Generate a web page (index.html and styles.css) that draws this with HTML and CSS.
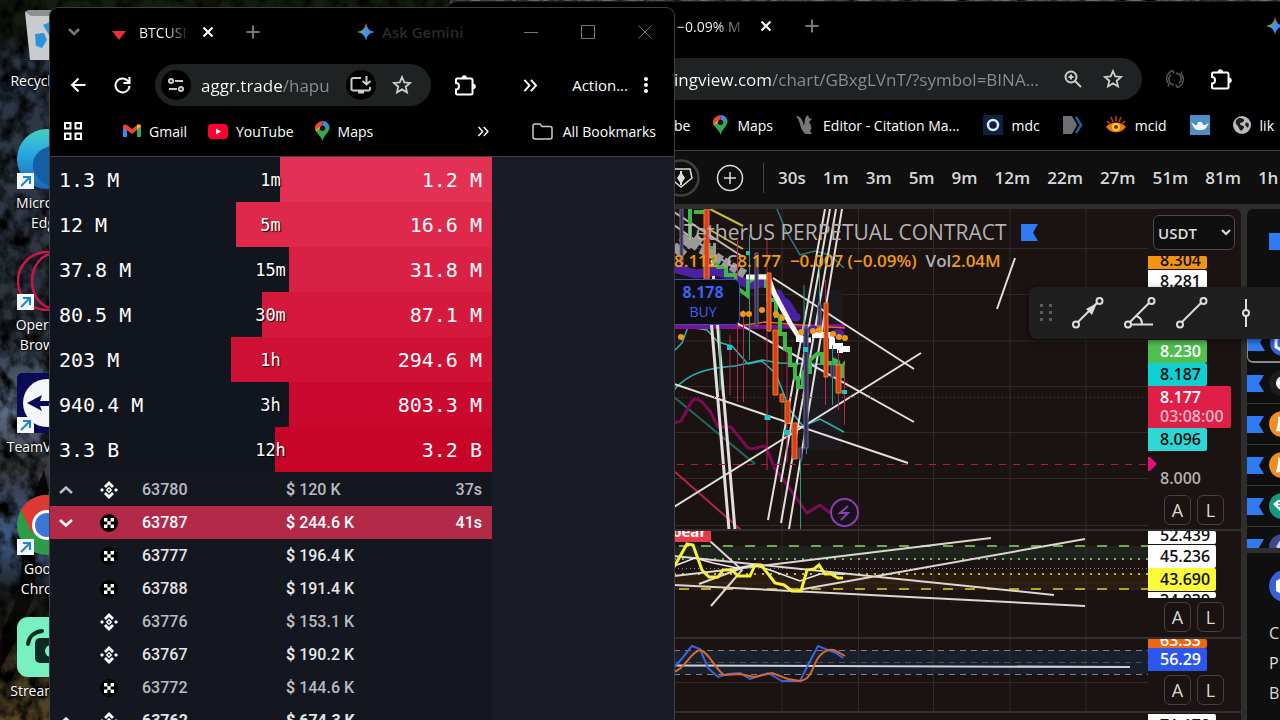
FILE: index.html
```html
<!DOCTYPE html>
<html lang="en">
<head>
    <meta charset="UTF-8">
    <meta name="viewport" content="width=device-width, initial-scale=1.0">
    <title>Desktop</title>
    <link rel="stylesheet" href="styles.css">
</head>
<body>
    <!-- shared icons -->
    <svg class="defs" width="0" height="0" aria-hidden="true">
        <defs>
            <linearGradient id="gemA" x1="0" y1="0" x2="1" y2="0.3">
                <stop offset="0" stop-color="#f5c518"/><stop offset=".35" stop-color="#4fb35f"/><stop offset=".6" stop-color="#4a8df8"/><stop offset="1" stop-color="#3f7cf5"/>
            </linearGradient>
            <linearGradient id="gemB" x1="0" y1="0" x2="0" y2="1">
                <stop offset="0" stop-color="#ef4444"/><stop offset=".4" stop-color="#ef4444" stop-opacity="0"/>
            </linearGradient>
            <linearGradient id="edge" x1="0" y1="0" x2="0" y2="1">
                <stop offset="0" stop-color="#45d0c0"/><stop offset=".4" stop-color="#2aa8e0"/><stop offset="1" stop-color="#1667b8"/>
            </linearGradient>
            <symbol id="i-gemini" viewBox="0 0 20 20">
                <path d="M10 0C11 6 14 9 20 10C14 11 11 14 10 20C9 14 6 11 0 10C6 9 9 6 10 0Z" fill="url(#gemA)"/>
                <path d="M10 0C11 6 14 9 20 10C14 11 11 14 10 20C9 14 6 11 0 10C6 9 9 6 10 0Z" fill="url(#gemB)"/>
            </symbol>
            <symbol id="i-x" viewBox="0 0 12 12"><path d="M1.5 1.5l9 9M10.5 1.5l-9 9" stroke="currentColor" stroke-width="2" fill="none"/></symbol>
            <symbol id="i-plus" viewBox="0 0 14 14"><path d="M7 .5v13M.5 7h13" stroke="currentColor" stroke-width="2" fill="none"/></symbol>
            <symbol id="i-star" viewBox="0 0 20 20"><path d="M10 2l2.3 5.4 5.8.5-4.400 3.800 1.300 5.700-5-3-5 3 1.300-5.700-4.400-3.800 5.800-.5z" stroke="currentColor" stroke-width="1.800" fill="none"/></symbol>
            <symbol id="i-puzzle" viewBox="0 0 22 22">
                <path d="M3 4.500h14a1.500 1.500 0 0 1 1.500 1.500v13a1.500 1.500 0 0 1-1.500 1.500H3.500A1.500 1.500 0 0 1 2 19v-3.500c4 0 4-6.500 0-6.500V5.500z" fill="none" stroke="currentColor" stroke-width="2"/>
                <path d="M8 4a2.300 2.300 0 0 1 4.600 0zM19 10a2.300 2.300 0 0 1 0 4.800z" fill="currentColor" stroke="currentColor"/>
            </symbol>
            <symbol id="i-more" viewBox="0 0 16 14"><path d="M2 1l5.500 6L2 13M9 1l5.500 6L9 13" stroke="currentColor" stroke-width="2" fill="none"/></symbol>
            <symbol id="i-maps" viewBox="0 0 14 19">
                <path d="M7 0a7 7 0 0 0-5.400 2.500L7 7z" fill="#e94335"/><path d="M7 0a7 7 0 0 1 6.500 4.500L7 8z" fill="#4285f4"/>
                <path d="M1.600 2.500A7 7 0 0 0 .8 10L7 6z" fill="#fbbc04"/><path d="M13.500 4.500C15 9.500 9 12 7 19 6 15 2.500 12.500.8 10L7 6z" fill="#34a853"/>
                <path d="M1.600 2.500A7 7 0 0 0 .5 9l5-5z" fill="#e94335"/><circle cx="7" cy="7" r="2.600" fill="#111"/>
            </symbol>
            <symbol id="i-link" viewBox="0 0 17 16"><path d="M0 0h17v16H0z" fill="#f4f6f8"/><path d="M4 13l8-8M6 4h7v7" stroke="#1c86c8" stroke-width="2" fill="none"/></symbol>
            <symbol id="i-binance" viewBox="0 0 18 18">
                <path d="M9 0l5 5-2 2-3-3-3 3-2-2zM9 18l5-5-2-2-3 3-3-3-2 2zM2 7l2 2-2 2-2-2zM16 7l2 2-2 2-2-2zM9 5.800L12.200 9 9 12.200 5.800 9z" fill="#fff"/>
                <path d="M9 7.800L10.200 9 9 10.200 7.800 9z" fill="#14171f"/>
            </symbol>
            <symbol id="i-okx" viewBox="0 0 18 18"><circle cx="9" cy="9" r="9" fill="#000"/><path d="M4 4h3.400v3.400H4zM10.600 4H14v3.400h-3.400zM7.300 7.300h3.400v3.400H7.300zM4 10.600h3.400V14H4zM10.600 10.600H14V14h-3.400z" fill="#fff"/></symbol>
            <symbol id="i-up" viewBox="0 0 14 8"><path d="M1 7l6-5.500L13 7" stroke="currentColor" stroke-width="2.500" fill="none"/></symbol>
            <symbol id="i-down" viewBox="0 0 14 8"><path d="M1 1l6 5.500L13 1" stroke="currentColor" stroke-width="2.500" fill="none"/></symbol>
            <symbol id="i-flag" viewBox="0 0 17 17"><path d="M0 0h17l-5 8.500 5 8.500H0z" fill="#2f7bf6"/></symbol>
        </defs>
    </svg>

    <svg class="wallpaper" width="100%" height="100%" aria-hidden="true">
        <defs>
            <linearGradient id="rock" x1="0" y1="0" x2="0" y2="1">
                <stop offset="0" stop-color="#141d0e"/><stop offset=".05" stop-color="#151c12"/><stop offset=".08" stop-color="#2a3444"/>
                <stop offset=".3" stop-color="#303947"/><stop offset=".45" stop-color="#293139"/><stop offset=".57" stop-color="#5b6c84"/>
                <stop offset=".65" stop-color="#3a3a3e"/><stop offset=".75" stop-color="#3d5a85"/><stop offset=".83" stop-color="#191a18"/><stop offset="1" stop-color="#5a4727"/>
            </linearGradient>
            <filter id="grain" x="0" y="0" width="100%" height="100%">
                <feTurbulence type="fractalNoise" baseFrequency=".07 .06" numOctaves="5" seed="8"/>
                <feColorMatrix values="0 0 0 0 0  0 0 0 0 0  0 0 0 0 0  0 2.400 0 0 -.85"/>
            </filter>
        </defs>
        <rect width="100%" height="100%" fill="url(#rock)"/>
        <path d="M450 0h830v4H450z" fill="#6a706d"/>
        <path d="M0 640L20 590 24 520 44 470 49 490 34 540 36 590 16 640 0 670z" fill="#0d0b08"/>
        <rect width="100%" height="100%" filter="url(#grain)"/>
    </svg>

    <ul class="shortcuts">
        <li>
            <svg width="60" height="60"><path d="M8 5l4-2h48v50H13z" fill="#c9ccce"/><path d="M8 5l6 4h46v-6H12z" fill="#8f9294"/><path d="M26 18l7-3 5 6-6 7zM18 27l9-1 3 7-5 8-6-2zM32 34h9v8h-8z" fill="#2a93dc"/></svg>
            <span>Recycle Bin</span>
        </li>
        <li>
            <svg width="60" height="60"><circle cx="30" cy="30" r="30" fill="url(#edge)"/><path d="M60 20c-22-10-46 0-44 18 2 14 14 20 26 20l18-8z" fill="#1560a5"/><use href="#i-link" y="44" width="17" height="16"/></svg>
            <span>Microsoft Edge</span>
        </li>
        <li>
            <svg width="60" height="60"><g fill="none" stroke="#c9164c" stroke-width="2.500"><circle cx="30" cy="30" r="29"/><ellipse cx="36" cy="30" rx="21" ry="27"/></g><use href="#i-link" y="43" width="17" height="16"/></svg>
            <span>Opera GX Browser</span>
        </li>
        <li>
            <svg width="60" height="60"><rect width="60" height="60" rx="5" fill="#0b0b55"/><circle cx="30" cy="30" r="24" fill="#f5f6f8"/><path d="M10 30l15-8-2 6h16v5H23l2 5z" fill="#0b0b55"/><use href="#i-link" y="44" width="17" height="16"/></svg>
            <span>TeamViewer</span>
        </li>
        <li>
            <svg width="60" height="60"><circle cx="30" cy="30" r="30" fill="#2f9a47"/><path d="M4 15a30 30 0 0 1 56 14H30L15 38z" fill="#dc3a32"/><circle cx="30" cy="30" r="15" fill="#fff"/><circle cx="30" cy="30" r="12" fill="#3b77d8"/><use href="#i-link" y="44" width="17" height="16"/></svg>
            <span>Google Chrome</span>
        </li>
        <li>
            <svg width="60" height="60"><rect width="60" height="60" rx="11" fill="#78f0c0"/><rect x="18" y="21" width="34" height="25" rx="5" fill="#0a2a24"/><path d="M11 27c1-7 6-12 14-13" stroke="#0a2a24" stroke-width="4" fill="none" stroke-linecap="round"/><circle cx="34" cy="34" r="6" fill="#78f0c0"/></svg>
            <span>Streamlabs</span>
        </li>
    </ul>

    <!-- TradingView window -->
    <section class="window window-chart">
        <header class="tabstrip">
            <span class="tab-title">−0.09% M</span>
            <button class="icon-btn tab-close" aria-label="Close tab"><svg width="12" height="12"><use href="#i-x"/></svg></button>
            <button class="icon-btn new-tab" aria-label="New tab"><svg width="14" height="14"><use href="#i-plus"/></svg></button>
            <button class="icon-btn gemini-only" aria-label="Gemini"><svg width="18" height="18"><use href="#i-gemini"/></svg></button>
        </header>
        <nav class="navbar">
            <div class="address">
                <input class="url url-chart" type="text" aria-label="Address" value="ingview.com/chart/GBxgLVnT/?symbol=BINA...">
                <button class="icon-btn" aria-label="Zoom"><svg width="20" height="20" fill="none" stroke="currentColor" stroke-width="2"><circle cx="8" cy="8" r="5.500"/><path d="M12 12l6 6M5.500 8h5M8 5.500v5"/></svg></button>
                <button class="icon-btn" aria-label="Bookmark"><svg width="20" height="20"><use href="#i-star"/></svg></button>
            </div>
            <button class="icon-btn dim" aria-label="Extension"><svg width="20" height="20" fill="none" stroke="currentColor" stroke-width="1.500"><path d="M8 1.500a8.500 8.500 0 0 0-4 14l-1 2M12 18.500a8.500 8.500 0 0 0 4-14l1-2M6 5.500a6 6 0 0 0 3 10.500M14 14.500A6 6 0 0 0 11 4M8 1.500l1 3M12 18.500l-1-3"/></svg></button>
            <button class="icon-btn" aria-label="Extensions"><svg width="22" height="22"><use href="#i-puzzle"/></svg></button>
        </nav>
        <nav class="bookmarks">
            <a href="#">be</a>
            <a href="#"><svg width="15" height="20"><use href="#i-maps"/></svg>Maps</a>
            <a href="#"><svg width="18" height="20" fill="#777"><path d="M0 1c5 0 7 5 8 10 1-4 0-9 4-11l1 3 3 1-3 3c3 4 3 7 1 9l2 3h-6C4 17 5 6 0 1z"/></svg>Editor - Citation Ma...</a>
            <a href="#"><svg width="20" height="20"><path d="M0 0h20v20H0z" fill="#0d2140"/><circle cx="10" cy="10" r="5" fill="none" stroke="#dfe8f5" stroke-width="2.500"/></svg>mdc</a>
            <a href="#" aria-label="Docs"><svg width="20" height="20"><path d="M0 1h9l5 9-5 9H0z" fill="#6c7075"/><path d="M13 2l5 8-5 8" fill="none" stroke="#1d5f92" stroke-width="2.500"/></svg></a>
            <a href="#"><svg width="20" height="18"><path d="M0 11c5-6 15-6 20 0-5 7-15 7-20 0z" fill="#f07a12"/><circle cx="10" cy="11" r="4" fill="#ffd21f"/><circle cx="10" cy="11" r="2" fill="#7a2500"/><path d="M1 5l3 3M5 1l2 5M10 0v5M15 1l-2 5M19 5l-3 3" stroke="#d9341a" stroke-width="1.500"/></svg>mcid</a>
            <a href="#" aria-label="Dock"><svg width="20" height="20"><path d="M0 0h20v20H0z" fill="#4f8fc4"/><path d="M1 7l4 3h2l1-3h4l1 3h2l4-2-3 5c-3 3-9 3-12 0z" fill="#f4f8fb"/></svg></a>
            <a href="#"><svg width="18" height="18"><circle cx="9" cy="9" r="9" fill="#b8babd"/><path d="M6 2c3 0 6 1 5 3s-4 1-4 3 4 1 4 3-2 2-2 4c-3-1-3-4-5-6s-2-5 2-7zM13 6l3 2-1 4-3-3z" fill="#1c1d1f"/></svg>lik</a>
        </nav>

        <div class="tv">
            <div class="tv-top">
                <button class="icon-btn pen" aria-label="Tools"><svg width="38" height="38" fill="none"><circle cx="19" cy="19" r="17.500" stroke="#404040" stroke-width="2.500"/><path d="M8 10h20l2 9-11 9L8 19z" stroke="#ddd" stroke-width="1.500"/><path d="M19 13l4 6-4 6-4-6zM18 12h2v14h-2z" fill="#ddd"/></svg></button>
                <button class="icon-btn" aria-label="Add"><svg width="28" height="28" fill="none" stroke="#ddd" stroke-width="1.500"><circle cx="14" cy="14" r="12.500"/><path d="M14 8v12M8 14h12"/></svg></button>
                <div class="intervals">
                    <button>30s</button><button>1m</button><button>3m</button><button>5m</button><button>9m</button><button>12m</button><button>22m</button><button>27m</button><button>51m</button><button>81m</button><button>1h</button>
                </div>
            </div>

            <div class="tv-body">
                <main class="panes">
                    <div class="pane pane-price">
                        <div class="plot">
                            <svg width="474" height="321" viewBox="674 209 474 321" fill="none">
                                <path d="M782 209v321M858.500 209v321M933.500 209v321M1010 209v321M1086 209v321M674 248.500h474M674 294.500h474M674 341h474M674 386.500h474M674 432.500h474M674 478.500h474M674 525.500h474" stroke="#302a2a"/>
                                <path d="M804 290h38v160h-38z" fill="#1c1a1f"/>
                                <!-- averages -->
                                <path d="M777 209l9 22 14 24 15-4 15 4 14 13" stroke="#287f82" stroke-width="1.500"/>
                                <path d="M674 351l8-8 6-16 19 3 11 12 14 4 16 18 14-3 14 13 14 36 13 16 17-7 24 13M674 390c15-18 35-22 61-24l27-6 18 3 65 2" stroke="#2cb5b0" stroke-width="1.500"/>
                                <path d="M674 397l81 67" stroke="#24695f" stroke-width="2"/>
                                <path d="M674 471l67 59" stroke="#b52447" stroke-width="2"/>
                                <path d="M674 423l7-2 11-20c4-4 6-1 9 0l9 10 8 16 13 0 17 21c8 3 13-4 18-1l9 22 15 20 17 24 13-8 10 8" stroke="#7d0a55" stroke-width="3"/>
                                <path d="M674 327h92l79-1" stroke="#7c1295" stroke-width="4"/>
                                <path d="M738 326l27-4 36 3 44 3" stroke="#e06a20" stroke-width="1.500"/>
                                <!-- trend lines -->
                                <g stroke="#e2dedc" stroke-width="2">
                                    <path d="M773 278l141 91M921 353L674 507M737 323l177 99M674 384l234 79M1015 258l-18 51"/>
                                    <path d="M825 209l-57 311M830 209l-49 273M836 209l-55 314M842 209l-53 320"/>
                                    <path d="M706 260l23 270M712 260l23 270" stroke-width="3"/>
                                    <path d="M674 212l69 45M674 225l50 36" stroke="#b9b5b2"/>
                                </g>
                                <path d="M710 209l33 17M707 228l36 21" stroke="#c9bd35" stroke-width="2"/>
                                <!-- bands -->
                                <path d="M674 268l22 6 20-3 18 6 16 8 18-3" stroke="#4a21a3" stroke-width="9"/>
                                <path d="M778 294l7 12M786 303l6 9M795 317h1M812 330h2M836 334h4" stroke="#4a21a3" stroke-width="9" stroke-linecap="round"/>
                                <path d="M690 209v34M694 212h14M712 246v10l6 11h8v8h10v12l12 9V282l10-6h8v10h2v14h8v16h4v18h5v15h5v16h5v13h3v9h5v-15h7v-12l7-6h5v9h12v-3l4 2 2 8 3-4v12" stroke="#41b649" stroke-width="4"/>
                                <path d="M676 254l14-16 10 8 8 4h8" stroke="#9c9a98" stroke-width="14" stroke-dasharray="9 3"/>
                                <path d="M708 252l38 23" stroke="#9c9a98" stroke-width="9" stroke-dasharray="7 2"/>
                                <path d="M746 277h22l6 16 16 30 11 17h10" stroke="#f6f3f3" stroke-width="5"/>
                                <path d="M796 339h12M812 335h22M832 338v8h8v7M838 349h12" stroke="#fff" stroke-width="6"/>
                                <!-- wicks -->
                                <path d="M737.500 240v162M743.500 310v92M767 240v230M787 350v112M825.500 280v125M838.500 350v60M844.500 365v60M730 335v60" stroke="#b32a55"/>
                                <path d="M749.500 235v125M804 285v60M800.500 448v82M806.500 448v6M819.500 260v60M832.500 345v60M720 330v60" stroke="#299b7e"/>
                                <!-- candles -->
                                <g fill="#dc3d20" stroke="#e38a27">
                                    <path d="M704 209h5v71h-5zM767 273h4v58h-4zM773 330h5v65h-5zM780 394h4v8h-4zM785 401h5v22h-5zM792 423h5v36h-5zM824 303h4v74h-4zM836 365h5v28h-5z"/>
                                </g>
                                <g fill="#33304e" stroke="#6c6795">
                                    <path d="M755 253h3v73h-3zM680 209h3v55h-3zM804 328h4v120h-4zM799 448h3v11h-3zM818 305h3v20h-3zM831 365h3v12h-3z"/>
                                </g>
                                <path d="M764.500 415h6v5h-6zM784 430h6v5h-6zM727 345h5v5h-5zM803 347h5v5h-5zM842 390h5v4h-5zM746 251h4v4h-4z" fill="#20c4c4"/>
                                <g fill="#ee9817"><circle cx="681" cy="337" r="3"/><circle cx="743" cy="314" r="3"/><circle cx="749" cy="314" r="3"/><circle cx="762" cy="310" r="3"/><circle cx="776" cy="314" r="3"/><circle cx="782" cy="318" r="3"/><circle cx="801" cy="332" r="3"/><circle cx="813" cy="331" r="3"/><circle cx="819" cy="330" r="3"/><circle cx="833" cy="334" r="3"/><circle cx="839" cy="337" r="3"/><circle cx="845" cy="338" r="3"/></g>
                                <path d="M674 397.500h474" stroke="#80303f" stroke-dasharray="1 3"/>
                                <path d="M677 464.500h471" stroke="#b3184d" stroke-dasharray="7 7"/>
                                <circle cx="844.500" cy="512.500" r="13.500" fill="#17111a" stroke="#8a3fae" stroke-width="2"/>
                                <path d="M848 506l-8 7h8l-7 7" stroke="#8a3fae" stroke-width="2"/>
                            </svg>
                            <div class="legend">
                                <div class="legend-title">TetherUS PERPETUAL CONTRACT <svg width="17" height="17"><use href="#i-flag"/></svg></div>
                                <div class="legend-values"><span>8.112</span><span><i>C</i>8.177</span><span>−0.007 (−0.09%)</span><span><i>Vol</i>2.04M</span></div>
                            </div>
                            <button class="buy"><b>8.178</b>BUY</button>
                        </div>
                        <div class="axis">
                            <select class="currency" aria-label="Currency"><option>USDT</option></select>
                            <span class="tag orange cut-top">8.304</span>
                            <span class="tag white">8.281</span>
                            <span class="tag green push">8.230</span>
                            <span class="tag cyan">8.187</span>
                            <span class="tag red">8.177<small>03:08:00</small></span>
                            <span class="tag aqua">8.096</span>
                            <svg class="marker" width="9" height="14"><path d="M0 0h2l7 7-7 7H0z" fill="#e0117c"/></svg>
                            <span class="tick">8.000</span>
                            <div class="scale"><button>A</button><button>L</button></div>
                        </div>
                    </div>

                    <div class="pane pane-rsi">
                        <div class="plot">
                            <svg width="474" height="106" viewBox="674 531 474 106" fill="none">
                                <path d="M674 546h474v14H674z" fill="#1e241b"/><path d="M674 573h474v17H674z" fill="#2b1d0d"/>
                                <path d="M782 531v106M858.500 531v106M933.500 531v106M1010 531v106M1086 531v106M674 583h474" stroke="#302a2a"/>
                                <path d="M674 546h474" stroke="#72a45e" stroke-width="2" stroke-dasharray="10 12" stroke-dashoffset="-5"/>
                                <path d="M674 559h474" stroke="#8fa080" stroke-width="2" stroke-dasharray="2 6"/>
                                <path d="M674 568.500h474" stroke="#8f8a88" stroke-dasharray="1 3"/>
                                <path d="M674 574h474" stroke="#c2b443" stroke-width="2" stroke-dasharray="2 6"/>
                                <path d="M674 589h474" stroke="#b5a51e" stroke-width="2" stroke-dasharray="10 12" stroke-dashoffset="-5"/>
                                <path d="M674 576l86-10 231-28M798 590l287-51M674 556l380 39M674 585l411 21M710 541l32 29-31 36M699 584l43-16" stroke="#ddd7d0" stroke-width="2"/>
                                <path d="M674 566l21-8 18 5 24 5 16-3 17 5 30 11 20-7 25 0" stroke="#eee" stroke-width="1.500"/>
                                <path d="M674 567l13-23 6 1 9 25 7 7h9l5-7h9l6 6h12l5-11h6l8 10 6 8 9 2 8 6h9l6-21 7-1 5-4 6 9h6l7 4h5" stroke="#f5f03c" stroke-width="3"/>
                            </svg>
                            <span class="signal">bear</span>
                        </div>
                        <div class="axis">
                            <span class="tag wide white cut-top">52.439</span>
                            <span class="tag wide white">45.236</span>
                            <span class="tag wide yellow">43.690</span>
                            <span class="tag wide white cut-bottom">34.939</span>
                            <div class="scale"><button>A</button><button>L</button></div>
                        </div>
                    </div>

                    <div class="pane pane-stoch">
                        <div class="plot">
                            <svg width="474" height="72" viewBox="674 639 474 72" fill="none">
                                <path d="M674 650h474v24H674z" fill="#19202b"/>
                                <path d="M782 639v72M858.500 639v72M933.500 639v72M1010 639v72M1086 639v72M674 682.500h474" stroke="#302a2a"/>
                                <path d="M674 650.500h474M674 674.500h474" stroke="#817f80" stroke-dasharray="6 5"/><path d="M674 662.500h474" stroke="#4a4f57" stroke-dasharray="6 5"/>
                                <path d="M674 665.500l456 1.500" stroke="#cfd0dc" stroke-width="2"/>
                                <path d="M674 667C682 660 688 650 692 646L700 649 708 668 718 677 728 674 740 673 750 679 768 673 782 681 800 681 808 665 818 646 828 650 836 653 843 658" stroke="#3e62df" stroke-width="2"/>
                                <path d="M674 672C686 668 690 652 700 650C710 653 714 668 724 675L740 674 754 677 772 673 788 679 800 681C812 679 812 667 818 658C824 650 830 648 836 651L845 656" stroke="#d66a31" stroke-width="2"/>
                            </svg>
                        </div>
                        <div class="axis">
                            <span class="tag deep cut-top short">63.33</span>
                            <span class="tag blue">56.29</span>
                            <div class="scale"><button>A</button><button>L</button></div>
                        </div>
                    </div>

                    <div class="pane pane-last">
                        <div class="plot"></div>
                        <div class="axis"><span class="tag wide white">71.178</span></div>
                    </div>
                </main>

                <aside class="watch">
                    <div class="watch-list">
                        <div class="watch-head"><span></span></div>
                        <div class="coin active"><svg width="17" height="17"><use href="#i-flag"/></svg><svg width="26" height="26"><circle cx="13" cy="13" r="13" fill="#3a62d8"/><path d="M13 5l7 4v8l-7 4-7-4V9z" fill="none" stroke="#fff" stroke-width="3"/></svg></div>
                        <div class="coin"><svg width="17" height="17"><use href="#i-flag"/></svg><svg width="26" height="26"><circle cx="13" cy="13" r="13" fill="#1d1d1d"/><circle cx="14" cy="13" r="7" fill="#fff"/></svg></div>
                        <div class="coin"><svg width="17" height="17"><use href="#i-flag"/></svg><svg width="26" height="26"><circle cx="13" cy="13" r="13" fill="#ef8e24"/><path d="M9 7h6a3 3 0 0 1 0 6h-5 6a3 3 0 0 1 0 6H7M11 7L9 19" fill="none" stroke="#fff" stroke-width="2.500"/></svg></div>
                        <div class="coin"><svg width="17" height="17"><use href="#i-flag"/></svg><svg width="26" height="26"><circle cx="13" cy="13" r="13" fill="#ef8e24"/><path d="M9 7h6a3 3 0 0 1 0 6h-5 6a3 3 0 0 1 0 6H7M11 7L9 19" fill="none" stroke="#fff" stroke-width="2.500"/></svg></div>
                        <div class="coin"><svg width="17" height="17"><use href="#i-flag"/></svg><svg width="26" height="26"><circle cx="13" cy="13" r="13" fill="#159a7d"/><path d="M9 7h12v7l-8 6-9-9z" fill="#fff"/><path d="M9 10h8M9 13h8" stroke="#159a7d" stroke-width="1.500"/></svg></div>
                        <div class="coin"><svg width="17" height="17"><use href="#i-flag"/></svg><svg width="26" height="26"><circle cx="13" cy="13" r="13" fill="#3c4a8c"/><path d="M13 3l6 10-6 4-6-4z" fill="#c9d0ef"/></svg></div>
                    </div>
                    <div class="details">
                        <svg width="32" height="32"><circle cx="16" cy="16" r="16" fill="#3a62d8"/><path d="M16 6l9 5v10l-9 5-9-5V11z" fill="#fff"/></svg>
                        <p>C</p><p>PI</p><p>BI</p>
                    </div>
                </aside>

                <div class="draw-bar">
                    <svg width="12" height="18" fill="#5c5c5c"><path d="M0 0h3v3H0zM9 0h3v3H9zM0 7h3v3H0zM9 7h3v3H9zM0 14h3v3H0zM9 14h3v3H9z"/></svg>
                    <button class="icon-btn" aria-label="Arrow"><svg width="32" height="32" fill="none" stroke="#ddd" stroke-width="2"><circle cx="4" cy="27.500" r="3"/><circle cx="27.500" cy="4" r="3"/><path d="M6 25L25 6"/><path d="M14 12l11-6-5 12z" fill="#ddd" stroke="none"/></svg></button>
                    <button class="icon-btn" aria-label="Trend angle"><svg width="32" height="32" fill="none" stroke="#ddd" stroke-width="2"><circle cx="4" cy="27.500" r="3"/><circle cx="27.500" cy="4" r="3"/><path d="M6 25L25 6M7 27.500h22M12 19c4 1 6 4 6 8"/></svg></button>
                    <button class="icon-btn" aria-label="Trend line"><svg width="32" height="32" fill="none" stroke="#ddd" stroke-width="2"><circle cx="4" cy="27.500" r="3"/><circle cx="27.500" cy="4" r="3"/><path d="M6 25L25 6"/></svg></button>
                    <button class="icon-btn" aria-label="Vertical line"><svg width="32" height="32" fill="none" stroke="#ddd" stroke-width="2"><circle cx="18" cy="16" r="3"/><path d="M18 2v11M18 19v11"/></svg></button>
                </div>
            </div>
        </div>
    </section>

    <!-- aggr window -->
    <section class="window window-aggr">
        <header class="tabstrip">
            <button class="icon-btn tab-list" aria-label="Search tabs"><svg width="12" height="8" fill="none" stroke="#777" stroke-width="2.500"><path d="M1 1l5 5 5-5"/></svg></button>
            <svg class="favicon" width="14" height="9"><path d="M0 0h14L7 9z" fill="#ee2c3c"/></svg>
            <span class="tab-title">BTCUSD</span>
            <button class="icon-btn tab-close" aria-label="Close tab"><svg width="12" height="12"><use href="#i-x"/></svg></button>
            <button class="icon-btn new-tab" aria-label="New tab"><svg width="14" height="14"><use href="#i-plus"/></svg></button>
            <button class="gemini"><svg width="18" height="18"><use href="#i-gemini"/></svg>Ask Gemini</button>
            <div class="win-controls">
                <button class="icon-btn" aria-label="Minimize"><svg width="14" height="14"><path d="M0 7.500h14" stroke="currentColor"/></svg></button>
                <button class="icon-btn" aria-label="Maximize"><svg width="14" height="14"><path d="M.5.5h13v13H.5z" stroke="currentColor" fill="none"/></svg></button>
                <button class="icon-btn" aria-label="Close"><svg width="14" height="14"><path d="M.5.5l13 13M13.5.5l-13 13" stroke="currentColor"/></svg></button>
            </div>
        </header>
        <nav class="navbar">
            <button class="icon-btn" aria-label="Back"><svg width="16" height="16" fill="none" stroke="currentColor" stroke-width="2"><path d="M15.500 8H2M8.500 1.500L2 8l6.500 6.500"/></svg></button>
            <button class="icon-btn reload" aria-label="Reload"><svg width="17" height="17" fill="none" stroke="currentColor" stroke-width="2"><path d="M15.500 9a7 7 0 1 1-2-5.500l1.500 2M15.500 0v6h-6"/></svg></button>
            <div class="address">
                <button class="icon-btn round" aria-label="Site settings"><svg width="16" height="16" fill="none" stroke="currentColor" stroke-width="2"><circle cx="3" cy="4" r="2"/><circle cx="13" cy="12" r="2"/><path d="M7 4h8M1 12h8"/></svg></button>
                <input class="url url-aggr" type="text" aria-label="Address" value="aggr.trade/hapu">
                <button class="icon-btn round install" aria-label="Install"><svg width="22" height="20" fill="none" stroke="currentColor" stroke-width="2"><path d="M11 3H3a1.500 1.500 0 0 0-1.500 1.500v9.500A1.500 1.500 0 0 0 3 15.500h15.500A1.500 1.500 0 0 0 20 14v-2M16.500 1v8M12.500 6l4 3.500 4-3.500M8 17.500h6"/></svg></button>
                <button class="icon-btn" aria-label="Bookmark"><svg width="20" height="20"><use href="#i-star"/></svg></button>
            </div>
            <button class="icon-btn ext" aria-label="Extensions"><svg width="22" height="22"><use href="#i-puzzle"/></svg></button>
            <button class="icon-btn overflow" aria-label="More extensions"><svg width="16" height="13"><use href="#i-more"/></svg></button>
            <button class="action">Action...<svg width="4" height="16" fill="currentColor"><circle cx="2" cy="2" r="2"/><circle cx="2" cy="8" r="2"/><circle cx="2" cy="14" r="2"/></svg></button>
        </nav>
        <nav class="bookmarks">
            <button class="icon-btn apps" aria-label="Apps"><svg width="18" height="18" fill="none" stroke="currentColor" stroke-width="2"><path d="M1 1h5.500v5.500H1zM11.500 1H17v5.500h-5.500zM1 11.500h5.500V17H1zM11.500 11.500H17V17h-5.500z"/></svg></button>
            <a href="#"><svg width="18" height="14"><path d="M0 2v11h4V6z" fill="#4285f4"/><path d="M18 2v11h-4V6z" fill="#34a853"/><path d="M0 2.500C0 0 3 0 4 1l5 4 5-4v5L9 10 0 3.500z" fill="#ea4335"/><path d="M14 1c1.500-1.500 4-.5 4 1.500L14 6z" fill="#fbbc04"/></svg>Gmail</a>
            <a href="#"><svg width="20" height="15"><rect width="20" height="15" rx="4" fill="#ff0033"/><path d="M8 4.500l5 3-5 3z" fill="#fff"/></svg>YouTube</a>
            <a href="#"><svg width="15" height="20"><use href="#i-maps"/></svg>Maps</a>
            <button class="icon-btn bm-more" aria-label="More bookmarks"><svg width="12" height="11"><use href="#i-more"/></svg></button>
            <button class="all-bm"><svg width="21" height="17" fill="none" stroke="#ccc" stroke-width="1.500"><path d="M1 3a2 2 0 0 1 2-2h5l2 2.500h8a2 2 0 0 1 2 2V14a2 2 0 0 1-2 2H3a2 2 0 0 1-2-2z"/></svg>All Bookmarks</button>
        </nav>

        <div class="aggr">
            <ul class="stats">
                <li class="s1"><span class="bar" style="width:48%"></span><span>1.3 M</span><em>1m</em><span>1.2 M</span></li>
                <li class="s2"><span class="bar" style="width:58%"></span><span>12 M</span><em>5m</em><span>16.6 M</span></li>
                <li class="s3"><span class="bar" style="width:46%"></span><span>37.8 M</span><em>15m</em><span>31.8 M</span></li>
                <li class="s4"><span class="bar" style="width:52%"></span><span>80.5 M</span><em>30m</em><span>87.1 M</span></li>
                <li class="s5"><span class="bar" style="width:59%"></span><span>203 M</span><em>1h</em><span>294.6 M</span></li>
                <li class="s6"><span class="bar" style="width:46%"></span><span>940.4 M</span><em>3h</em><span>803.3 M</span></li>
                <li class="s7"><span class="bar" style="width:49%"></span><span>3.3 B</span><em>12h</em><span>3.2 B</span></li>
            </ul>
            <table class="trades">
                <tbody>
                    <tr class="soft"><td><svg width="14" height="8"><use href="#i-up"/></svg></td><td><svg width="18" height="18"><use href="#i-binance"/></svg></td><td>63780</td><td><b>$</b> 120 K</td><td>37s</td></tr>
                    <tr class="sell"><td><svg width="14" height="8"><use href="#i-down"/></svg></td><td><svg width="18" height="18"><use href="#i-okx"/></svg></td><td>63787</td><td><b>$</b> 244.6 K</td><td>41s</td></tr>
                    <tr><td></td><td><svg width="18" height="18"><use href="#i-okx"/></svg></td><td>63777</td><td><b>$</b> 196.4 K</td><td></td></tr>
                    <tr><td></td><td><svg width="18" height="18"><use href="#i-okx"/></svg></td><td>63788</td><td><b>$</b> 191.4 K</td><td></td></tr>
                    <tr class="soft"><td></td><td><svg width="18" height="18"><use href="#i-binance"/></svg></td><td>63776</td><td><b>$</b> 153.1 K</td><td></td></tr>
                    <tr><td></td><td><svg width="18" height="18"><use href="#i-binance"/></svg></td><td>63767</td><td><b>$</b> 190.2 K</td><td></td></tr>
                    <tr class="soft"><td></td><td><svg width="18" height="18"><use href="#i-okx"/></svg></td><td>63772</td><td><b>$</b> 144.6 K</td><td></td></tr>
                    <tr class="big"><td><svg width="14" height="8"><use href="#i-up"/></svg></td><td><svg width="18" height="18"><use href="#i-binance"/></svg></td><td>63762</td><td><b>$</b> 674.3 K</td><td></td></tr>
                </tbody>
            </table>
        </div>
    </section>
</body>
</html>
```
FILE: styles.css
```css
* {
    box-sizing: border-box;
    margin: 0;
    padding: 0;
}

body {
    position: relative;
    height: 100vh;
    overflow: hidden;
    background-color: #1b2027;
    font-family: 'Open Sans', 'Noto Sans', sans-serif;
    color: #fff;
}

svg {
    display: block;
    flex: none;
}

ul {
    list-style: none;
}

a {
    color: inherit;
    text-decoration: none;
}

button {
    border: none;
    background: none;
    color: inherit;
    font: inherit;
    cursor: pointer;
}

.defs {
    position: absolute;
}

.wallpaper {
    position: absolute;
    inset: 0;
}

/* desktop shortcuts */
.shortcuts {
    position: absolute;
    top: 7px;
    left: 0;
    width: 94px;
}

.shortcuts li {
    display: flex;
    flex-direction: column;
    align-items: center;
    gap: 4px;
    height: 122px;
    padding: 0 8px;
}

.shortcuts span {
    font-size: 14px;
    line-height: 20px;
    text-align: center;
    text-shadow: 0 1px 2px #000, 0 0 2px #000;
}

/* browser windows */
.window {
    position: absolute;
    display: flex;
    flex-direction: column;
    overflow: hidden;
    background: #000;
    border-radius: 9px 9px 0 0;
}

.window-chart {
    top: 1px;
    left: 448px;
    right: 0;
    bottom: -20px;
    padding-left: 226px;
    border-top: 1px solid #1c1e1e;
    border-radius: 9px 0 0 0;
}

.window-aggr {
    top: 7px;
    left: 49px;
    width: 626px;
    bottom: -20px;
    border: 1px solid #3d3f42;
}

.tabstrip {
    display: flex;
    align-items: center;
    flex: none;
    height: 48px;
}

.navbar {
    display: flex;
    align-items: center;
    flex: none;
    height: 58px;
}

.bookmarks {
    display: flex;
    align-items: center;
    flex: none;
    height: 43px;
    padding-bottom: 8px;
    border-bottom: 1px solid #3d3f42;
    font-size: 14px;
}

.icon-btn {
    display: flex;
    align-items: center;
    justify-content: center;
    flex: none;
}

.bookmarks a,
.all-bm {
    display: flex;
    align-items: center;
    gap: 8px;
    white-space: nowrap;
}

.tab-title {
    overflow: hidden;
    white-space: nowrap;
    font-size: 14px;
    background: linear-gradient(90deg, #fff 60%, #222);
    background-clip: text;
    -webkit-background-clip: text;
    color: transparent;
}

.new-tab {
    color: #777;
    margin-left: 32px;
}

.address {
    display: flex;
    align-items: center;
    height: 42px;
    background: #1f2223;
    border-radius: 21px;
    color: #ccc;
}

/* host part is white, the path is grey */
.url {
    flex: 1;
    min-width: 0;
    height: 30px;
    border: none;
    outline: none;
    font-family: inherit;
    font-size: 17px;
    color: transparent;
    caret-color: #fff;
    background-clip: text;
    -webkit-background-clip: text;
}

.url-aggr {
    margin-left: 10px;
    background-image: linear-gradient(90deg, #fff 81px, #8c8e90 81px);
}

.url-chart {
    background-image: linear-gradient(90deg, #fff 97px, #8c8e90 97px);
}

/* aggr window chrome */
.tab-list {
    margin-left: 18px;
}

.favicon {
    margin: 6px 13px 0 32px;
}

.window-aggr .tab-title {
    width: 47px;
}

.window-aggr .tab-close {
    margin-left: 16px;
}

.gemini {
    display: flex;
    align-items: center;
    gap: 7px;
    margin-left: 97px;
    font-size: 15px;
    font-weight: 600;
    color: #2a2a2a;
}

.win-controls {
    display: flex;
    gap: 43px;
    margin-left: auto;
    margin-right: 22px;
    color: #777;
}

.window-aggr .navbar {
    padding-left: 20px;
}

.reload {
    margin-left: 28px;
}

.window-aggr .address {
    width: 276px;
    margin-left: 24px;
    padding: 0 19px 0 6px;
}

.round {
    width: 30px;
    height: 30px;
    border-radius: 50%;
    background: #000;
}

.install {
    margin-right: 16px;
}

.ext {
    margin-left: 23px;
}

.overflow {
    margin-left: 46px;
}

.action {
    display: flex;
    align-items: center;
    gap: 16px;
    margin-left: auto;
    margin-right: 26px;
    font-size: 15px;
}

.window-aggr .bookmarks {
    padding-left: 14px;
    padding-right: 18px;
}

.apps {
    margin-right: 41px;
}

.window-aggr .bookmarks a {
    margin-right: 21px;
}

.bm-more {
    margin-left: auto;
    margin-right: 43px;
}

.window-aggr .all-bm {
    gap: 10px;
}

/* aggr content */
.aggr {
    flex: 1;
    background: #191c27;
}

.stats,
.trades {
    width: 442px;
    background: #11151e;
}

.stats {
    padding-bottom: 1px;
}

.stats li {
    position: relative;
    display: grid;
    grid-template-columns: 1fr auto 1fr;
    align-items: center;
    height: 45px;
    padding: 0 10px 0 9px;
    font-family: 'DejaVu Sans Mono', monospace;
    font-size: 20px;
}

.stats li > span,
.stats em {
    z-index: 1;
}

.stats li > span:last-child {
    text-align: right;
}

.stats em {
    font-style: normal;
    font-size: 17px;
    text-shadow: 1px 1px 1px #000;
}

.stats li > .bar {
    position: absolute;
    top: 0;
    right: 0;
    bottom: 0;
    z-index: 0;
}

.s1 .bar { background: #e23154; }
.s2 .bar { background: #de294c; }
.s3 .bar { background: #d82145; }
.s4 .bar { background: #d4193d; }
.s5 .bar { background: #cf1136; }
.s6 .bar { background: #ca092f; }
.s7 .bar { background: #c60529; }

.trades {
    border-collapse: collapse;
    table-layout: fixed;
    background: #14171f;
    font-family: Roboto, sans-serif;
    font-size: 16px;
    font-weight: 500;
    color: #e4e6e8;
}

.trades td {
    height: 33px;
    width: 44px;
    white-space: nowrap;
}

.trades td:nth-child(1) {
    padding-left: 9px;
}

.trades td:nth-child(2) {
    width: 48px;
    padding-left: 6px;
}

.trades td:nth-child(3) {
    width: 144px;
}

.trades td:nth-child(4) {
    width: 140px;
}

.trades td:nth-child(5) {
    width: auto;
    padding-right: 10px;
    text-align: right;
}

.trades .soft {
    color: #b9bcc1;
}

.trades .sell {
    background: #b32a48;
    color: #fff;
}

.trades .big {
    font-weight: 700;
}

/* chart window chrome */
.window-chart .tab-title {
    width: 68px;
    margin-left: 3px;
}

.window-chart .tab-close {
    margin-left: 15px;
}

.window-chart .new-tab {
    margin-left: 33px;
}

.gemini-only {
    margin-left: auto;
    margin-right: -4px;
}

.window-chart .address {
    width: 468px;
    gap: 20px;
    padding-right: 19px;
    border-radius: 0 21px 21px 0;
}

.window-chart .navbar .dim {
    margin-left: 23px;
    margin-right: 25px;
    color: #555;
}

.window-chart .bookmarks {
    gap: 23px;
}

.window-chart .bookmarks a {
    gap: 9px;
}

/* tradingview */
.tv {
    flex: 1;
    display: flex;
    flex-direction: column;
    background: #2e2e2e;
}

.tv-top {
    display: flex;
    align-items: center;
    flex: none;
    height: 53px;
    margin-bottom: 5px;
    background: #0f0f0f;
}

.pen {
    margin-left: -12px;
    margin-right: 16px;
}

.intervals {
    display: flex;
    gap: 17px;
    margin-left: 19px;
    padding-left: 14px;
    border-left: 1px solid #444;
    font-size: 17px;
    font-weight: 600;
    line-height: 30px;
    color: #d8d8d8;
}

.tv-body {
    position: relative;
    flex: 1;
    display: flex;
    gap: 6px;
    overflow: hidden;
}

.panes {
    flex: 1;
    display: flex;
    flex-direction: column;
    gap: 2px;
    background: #303034;
    border-radius: 0 6px 0 0;
    overflow: hidden;
}

.pane {
    display: flex;
    background: #1a1312;
}

.pane-price { height: 320px; }
.pane-rsi { height: 106px; }
.pane-stoch { height: 72px; }
.pane-last { flex: 1; }

.plot {
    position: relative;
    flex: 1;
    overflow: hidden;
}

.legend {
    position: absolute;
    top: 8px;
    left: 0;
    white-space: nowrap;
}

.legend-title {
    display: flex;
    align-items: center;
    gap: 14px;
    padding-left: 10px;
    font-size: 21px;
    line-height: 30px;
    color: #b4b1b2;
}

.legend-values {
    display: flex;
    gap: 9px;
    font-size: 17px;
    font-weight: 600;
    line-height: 28px;
    color: #ef9a1a;
}

.legend-values i {
    font-style: normal;
    color: #b4b1b2;
}

.buy {
    position: absolute;
    top: 70px;
    left: -8px;
    width: 74px;
    height: 46px;
    background: #0d0d12;
    border: 1px solid #3653b8;
    border-radius: 6px;
    font-size: 14px;
    line-height: 20px;
    color: #3c62f0;
}

.buy b {
    display: block;
    font-size: 16px;
}

.signal {
    position: absolute;
    top: -10px;
    left: -8px;
    width: 45px;
    padding-left: 6px;
    background: #e93a4b;
    font-size: 15px;
    font-weight: 700;
    line-height: 21px;
}

.axis {
    display: flex;
    flex-direction: column;
    align-items: flex-start;
    flex: none;
    width: 93px;
}

.currency {
    flex: none;
    width: 82px;
    height: 35px;
    margin: 6px 5px;
    background: #0f0f0f;
    border: 1px solid #4a4a4a;
    border-radius: 6px;
    font-family: inherit;
    font-size: 15px;
    font-weight: 600;
    color: #ddd;
}

.tag {
    flex: none;
    width: 59px;
    height: 23px;
    padding-left: 12px;
    overflow: hidden;
    border-radius: 0 2px 2px 0;
    font-size: 16px;
    font-weight: 600;
    line-height: 23px;
}

.wide { width: 68px; }
.orange { background: #f39410; color: #111; }
.white { background: #fff; color: #111; margin-top: 1px; }
.green { background: #4fbf50; }
.cyan { background: #10cfd0; color: #111; }
.aqua { background: #2dd8d4; color: #111; }
.yellow { background: #fbfb3c; color: #111; }
.deep { background: #ee660f; }
.blue { background: #2b57ee; }

.tag.red {
    width: 83px;
    height: 42px;
    padding-top: 1px;
    background: #e01f48;
    line-height: 20px;
}

.red small {
    display: block;
    font-size: 16px;
    color: #f3b4c2;
    line-height: 19px;
}

.tag.cut-top {
    display: flex;
    align-items: flex-end;
    height: 13px;
    line-height: 17px;
}

.tag.cut-bottom {
    height: 6px;
    line-height: 16px;
}

.tag.short {
    height: 9px;
    line-height: 15px;
}

.push {
    margin-top: 47px;
}

.marker {
    margin-top: 6px;
}

.tick {
    padding-left: 12px;
    font-size: 16px;
    font-weight: 600;
    line-height: 14px;
    color: #b3b0b0;
}

.pane-rsi .white:first-child {
    margin-top: 0;
}

.scale {
    display: flex;
    gap: 6px;
    margin: 4px 0 0 16px;
}

.tick + .scale {
    margin-top: 10px;
}

.scale button {
    width: 27px;
    height: 30px;
    border: 1px solid #454142;
    border-radius: 6px;
    font-size: 18px;
    color: #d8d8d8;
}

/* right side panel */
.watch {
    display: flex;
    flex-direction: column;
    gap: 5px;
    flex: none;
    width: 33px;
    overflow: hidden;
}

.watch-list {
    height: 339px;
    overflow: hidden;
    background: #0f0f0f;
    border-radius: 6px 0 0 0;
}

.watch-head {
    height: 113px;
    padding: 24px 0 0 22px;
}

.watch-head span {
    display: block;
    width: 17px;
    height: 17px;
    background: #2f7bf6;
}

.coin {
    display: flex;
    align-items: center;
    gap: 5px;
    height: 41px;
    border-bottom: 1px solid #383838;
}

.coin.active {
    border: 2px solid #888;
    border-width: 2px 0 2px 1px;
    border-radius: 6px 0 0 6px;
}

.details {
    flex: 1;
    padding: 17px 0 0 22px;
    background: #0f0f0f;
    font-size: 16px;
    line-height: 30px;
    color: #ddd;
}

.details svg {
    margin-bottom: 16px;
}

/* floating drawing tools */
.draw-bar {
    position: absolute;
    top: 78px;
    right: 0;
    display: flex;
    align-items: center;
    gap: 20px;
    width: 251px;
    height: 52px;
    padding-left: 11px;
    background: #1f1f1f;
    border-radius: 8px 0 0 8px;
    box-shadow: 0 2px 6px rgba(0, 0, 0, 0.5);
}
```
